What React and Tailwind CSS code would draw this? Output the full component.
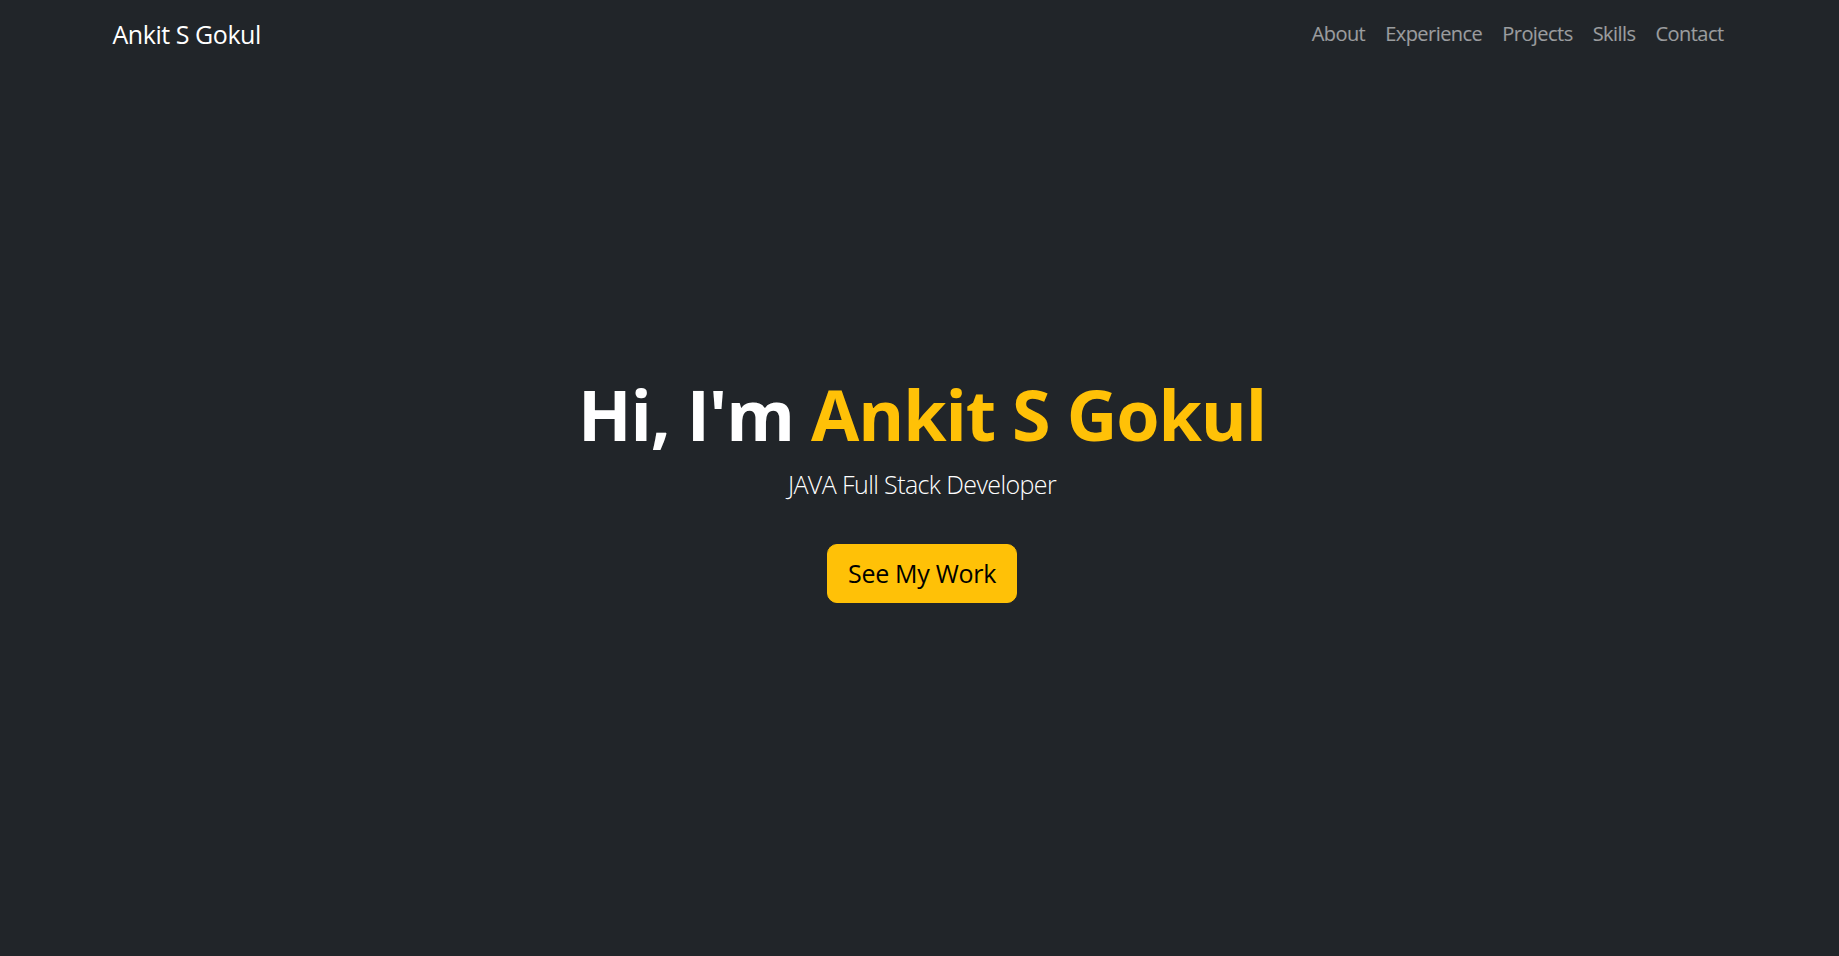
const links = ['About', 'Experience', 'Projects', 'Skills', 'Contact'];

function Navbar() {
  return (
    <nav className="py-[10px]">
      <div className="mx-auto flex w-[1650px] items-center justify-between px-[15px]">
        <a
          href="#"
          className="ml-[3px] py-[6px] text-[25px] leading-[37.5px] tracking-[-0.45px] text-white no-underline"
        >
          Ankit S Gokul
        </a>
        <ul className="mr-[-4px] mb-[2px] flex items-center">
          {links.map((label) => (
            <li key={label}>
              <a
                href={`#${label.toLowerCase()}`}
                className="block px-[10px] py-[9px] text-[20px] leading-[30px] tracking-[-0.55px] text-white/55 no-underline"
              >
                {label}
              </a>
            </li>
          ))}
        </ul>
      </div>
    </nav>
  );
}

function Hero() {
  return (
    <section className="flex flex-col items-center pt-[302px] pl-[5px] text-center">
      <h1 className="mb-[10px] text-[70px] font-bold leading-[84px] tracking-[-1.1px] text-white">
        Hi, I'm <span className="text-[#ffc107]">Ankit S Gokul</span>
      </h1>
      <p className="mb-[40px] text-[25px] font-light leading-[37.5px] tracking-[-0.6px] text-white">
        JAVA Full Stack Developer
      </p>
      <a
        href="#projects"
        className="rounded-[10px] border-[1.25px] border-[#ffc107] bg-[#ffc107] px-[20px] py-[10px] text-[25px] leading-[37.5px] tracking-[-0.3px] text-black no-underline"
      >
        See My Work
      </a>
    </section>
  );
}

export default function App() {
  return (
    <div className="min-h-screen bg-[#212529] font-['Open_Sans',sans-serif]">
      <Navbar />
      <Hero />
    </div>
  );
}
